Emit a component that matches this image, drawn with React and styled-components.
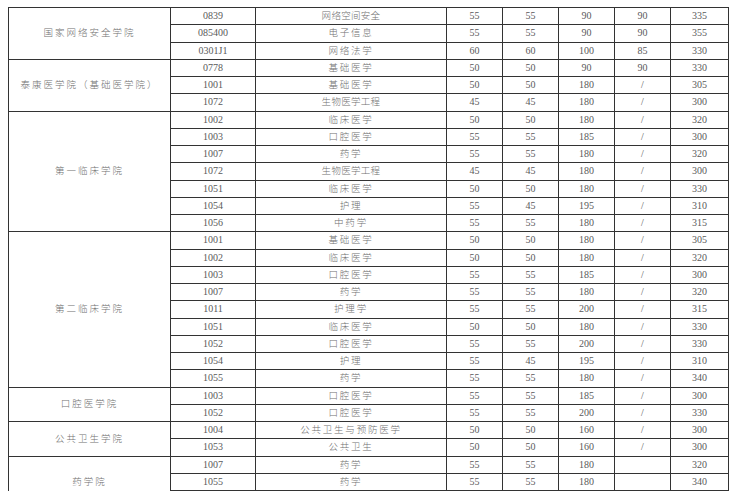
import styled, { createGlobalStyle } from "styled-components";

const GlobalStyle = createGlobalStyle`
  html, body {
    margin: 0;
    padding: 0;
    background: #ffffff;
  }
`;

const Page = styled.div`
  padding: 7px 0 0 8px;
`;

// the screenshot is cut off in the middle of the last group
const Clip = styled.div`
  width: 721px;
  height: 484px;
  overflow: hidden;
`;

const Table = styled.table`
  width: 720px;
  border-collapse: collapse;
  table-layout: fixed;
  font-family: "Liberation Serif", "Noto Sans CJK SC", serif;
  font-size: 10px;
  color: #5a5a5a;
`;

const Row = styled.tr`
  height: 17.25px;
`;

const Cell = styled.td`
  border: 1px solid #333333;
  padding: 0;
  text-align: center;
  vertical-align: middle;
  line-height: 12px;
  white-space: nowrap;
  overflow: hidden;
`;

const SchoolCell = styled(Cell)`
  font-size: 9.5px;
  font-weight: 300;
  color: #707070;
  letter-spacing: 2px;
`;

const NameCell = styled(Cell)`
  font-size: 9.5px;
  font-weight: 300;
  color: #707070;
  letter-spacing: ${(props) => (props.tight ? "0.3px" : "1.8px")};
`;

const groups = [
  {
    school: "国家网络安全学院",
    rows: [
      ["0839", "网络空间安全", "55", "55", "90", "90", "335"],
      ["085400", "电子信息", "55", "55", "90", "90", "355"],
      ["0301J1", "网络法学", "60", "60", "100", "85", "330"],
    ],
  },
  {
    school: "泰康医学院（基础医学院）",
    rows: [
      ["0778", "基础医学", "50", "50", "90", "90", "330"],
      ["1001", "基础医学", "50", "50", "180", "/", "305"],
      ["1072", "生物医学工程", "45", "45", "180", "/", "300"],
    ],
  },
  {
    school: "第一临床学院",
    rows: [
      ["1002", "临床医学", "50", "50", "180", "/", "320"],
      ["1003", "口腔医学", "55", "55", "185", "/", "300"],
      ["1007", "药学", "55", "55", "180", "/", "320"],
      ["1072", "生物医学工程", "45", "45", "180", "/", "300"],
      ["1051", "临床医学", "50", "50", "180", "/", "330"],
      ["1054", "护理", "55", "45", "195", "/", "310"],
      ["1056", "中药学", "55", "55", "180", "/", "315"],
    ],
  },
  {
    school: "第二临床学院",
    rows: [
      ["1001", "基础医学", "50", "50", "180", "/", "305"],
      ["1002", "临床医学", "50", "50", "180", "/", "320"],
      ["1003", "口腔医学", "55", "55", "185", "/", "300"],
      ["1007", "药学", "55", "55", "180", "/", "320"],
      ["1011", "护理学", "55", "55", "200", "/", "315"],
      ["1051", "临床医学", "50", "50", "180", "/", "330"],
      ["1052", "口腔医学", "55", "55", "200", "/", "330"],
      ["1054", "护理", "55", "45", "195", "/", "310"],
      ["1055", "药学", "55", "55", "180", "/", "340"],
    ],
  },
  {
    school: "口腔医学院",
    rows: [
      ["1003", "口腔医学", "55", "55", "185", "/", "300"],
      ["1052", "口腔医学", "55", "55", "200", "/", "330"],
    ],
  },
  {
    school: "公共卫生学院",
    rows: [
      ["1004", "公共卫生与预防医学", "50", "50", "160", "/", "300"],
      ["1053", "公共卫生", "50", "50", "160", "/", "300"],
    ],
  },
  {
    school: "药学院",
    rows: [
      ["1007", "药学", "55", "55", "180", "", "320"],
      ["1055", "药学", "55", "55", "180", "", "340"],
      ["", "", "", "", "", "", ""],
    ],
  },
];

const widths = [162, 85, 191, 56, 56, 56, 56, 58];

const App = () => {
  return (
    <Page>
      <GlobalStyle />
      <Clip>
        <Table>
          <colgroup>
            {widths.map((w, i) => (
              <col key={i} style={{ width: w }} />
            ))}
          </colgroup>
          <tbody>
            {groups.map((group) =>
              group.rows.map((row, i) => (
                <Row key={group.school + i}>
                  {i === 0 && (
                    <SchoolCell rowSpan={group.rows.length}>{group.school}</SchoolCell>
                  )}
                  <Cell>{row[0]}</Cell>
                  <NameCell tight={row[1].length === 6}>{row[1]}</NameCell>
                  <Cell>{row[2]}</Cell>
                  <Cell>{row[3]}</Cell>
                  <Cell>{row[4]}</Cell>
                  <Cell>{row[5]}</Cell>
                  <Cell>{row[6]}</Cell>
                </Row>
              ))
            )}
          </tbody>
        </Table>
      </Clip>
    </Page>
  );
};

export default App;
